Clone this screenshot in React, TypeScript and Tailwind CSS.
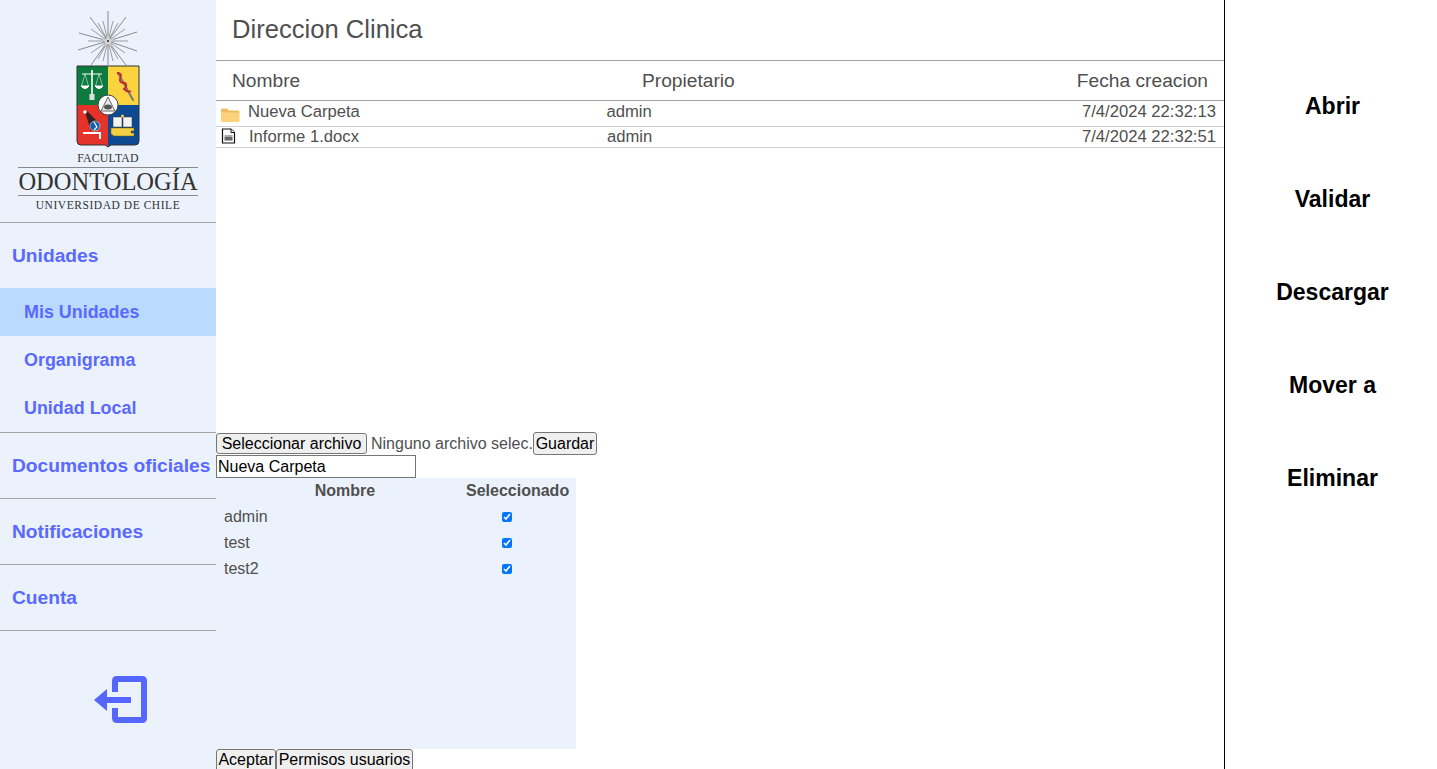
import React from "react";

const blue = "text-[#5a69ff]";

const longRays: [number, number][] = [
  [0, -30], [-29, -8], [-30, 9], [-18, -24], [18, -24], [29, -9], [29, 10], [-17, 24], [18, 24], [0, 24],
];
const shortRays: [number, number][] = [
  [-20, 0], [20, 0], [-10, -18], [10, -18], [-10, 18], [10, 18], [-17, -12], [17, -12], [-17, 12], [17, 12], [-5, -20], [5, -20], [-5, 20], [5, 20],
];

function Logo() {
  return (
    <svg width="64" height="140" viewBox="1 0 64 140" className="block">
      <g transform="translate(33,30)" stroke="#444" strokeWidth="0.6">
        {longRays.map(([x, y], i) => (
          <line key={i} x1="0" y1="0" x2={x} y2={y} />
        ))}
        {shortRays.map(([x, y], i) => (
          <line key={i} x1="0" y1="0" x2={x} y2={y} strokeWidth="0.5" />
        ))}
        <polygon points="0,-7 2,-2 7,-2 3,1 4,6 0,3 -4,6 -3,1 -7,-2 -2,-2" fill="#d5d5d5" stroke="#999" strokeWidth="0.4" />
        <circle cx="0" cy="0" r="1" fill="#222" stroke="none" />
      </g>
      <rect x="2" y="55" width="31" height="39" fill="#0d7a3f" />
      <rect x="33" y="55" width="31" height="39" fill="#fbd33f" />
      <path d="M2 94H33V136L30 134H6Q2 134 2 130Z" fill="#e5332a" />
      <path d="M33 94H64V130Q64 134 60 134H36L33 136Z" fill="#0d4a94" />
      <path d="M2 55H64V130Q64 134 60 134H36L33 136L30 134H6Q2 134 2 130Z" fill="none" stroke="#333" strokeWidth="1" />
      {/* balance */}
      <g stroke="#fff" strokeWidth="1" fill="none" transform="translate(1,0)">
        <line x1="16" y1="59" x2="16" y2="86" strokeWidth="1.600" />
        <line x1="6" y1="63" x2="26" y2="63" />
        <path d="M9 63L5.500 75M9 63L12.500 75M23 63L19.500 75M23 63L26.500 75" strokeWidth="0.500" />
        <path d="M5 75H13Q9 80 5 75ZM19 75H27Q23 80 19 75Z" fill="#fff" />
        <rect x="13.500" y="83" width="5" height="6" fill="#ddd" stroke="none" />
      </g>
      {/* snake staff */}
      <path d="M43 62L58 89" stroke="#777" strokeWidth="2" strokeLinecap="round" />
      <path d="M42 62Q48 62 45 68Q44 72 50 72Q53 75 49 78Q53 82 56 80" stroke="#c7252a" strokeWidth="1.800" fill="none" />
      {/* center */}
      <circle cx="33" cy="94" r="10" fill="#fff" stroke="#444" strokeWidth="1" />
      <polygon points="33,86 40,100 26,100" fill="#e8e8e8" stroke="#666" strokeWidth="1" />
      <ellipse cx="33" cy="96" rx="4" ry="2.500" fill="#555" />
      {/* red quadrant */}
      <polygon points="10,101 12,100 24,112 16,120" fill="#3a1f1f" />
      <circle cx="10" cy="101" r="1.800" fill="#fff" />
      <path d="M8 122H25V128" stroke="#fff" strokeWidth="2" fill="none" />
      <circle cx="20" cy="115" r="5" fill="#155fa8" stroke="#fff" strokeWidth="0.500" />
      <path d="M19 111L22 116L19 119" stroke="#fff" strokeWidth="1.200" fill="none" />
      {/* book */}
      <path d="M38 106H47V116H38ZM48 106H57V116H48Z" fill="#f2f2f2" stroke="#333" strokeWidth="0.500" />
      <circle cx="47.500" cy="105" r="1.500" fill="#f3cf45" />
      <path d="M36 117H59V120H56V122H59V125H39L36 123Z" fill="#f3cf45" stroke="#6f5c12" strokeWidth="0.500" />
    </svg>
  );
}

function DocIcon() {
  return (
    <svg width="15" height="16" viewBox="0 0 15 16" className="block">
      <path d="M1.500 1H10L13.500 4.500V15H1.500Z" fill="#fff" stroke="#111" strokeWidth="1.200" />
      <path d="M10 1V4.500H13.500" fill="#fff" stroke="#111" strokeWidth="1" />
      <rect x="3.500" y="7" width="8" height="2" fill="#aaa" />
      <rect x="3.500" y="9" width="8" height="3.500" fill="#666" />
    </svg>
  );
}

function FolderIcon() {
  return (
    <svg width="19" height="14" viewBox="0 0 19 14" className="block">
      <path d="M0 2Q0 0.500 1.500 0.500H6L8 2.500H17Q18.500 2.500 18.500 4V5H0Z" fill="#f0bd5e" />
      <path d="M0 4.500H18.500V12.500Q18.500 14 17 14H1.500Q0 14 0 12.500Z" fill="#fcd27a" />
    </svg>
  );
}

function NavTitle({ children }: { children: React.ReactNode }) {
  return <div className={`h-[66px] flex items-center pl-3 pt-[2px] text-[19.2px] font-bold border-b border-[#a5a5a5] whitespace-nowrap ${blue}`}>{children}</div>;
}

function SubItem({ children, active }: { children: React.ReactNode; active?: boolean }) {
  return <div className={`h-12 flex items-center pl-6 text-[17.92px] font-bold ${blue} ${active ? "bg-[#bbdaff]" : ""}`}>{children}</div>;
}

const btn = "border border-[#767676] bg-[#efefef] rounded-[3px] text-black text-base leading-[18px] shrink-0";

export default function App() {
  return (
    <div className="flex h-[769px] w-[1437px] overflow-hidden bg-white text-[#4f4f4f] font-['Liberation_Sans',Arial,sans-serif]">
      <aside className="w-[216px] shrink-0 bg-[#ebf2fb] flex flex-col">
        <div className="h-[223px] shrink-0 border-b border-[#a5a5a5] flex flex-col items-center">
          <div className="h-[150px] shrink-0 pt-[11px]"><Logo /></div>
          <div className="mt-[2px] text-[11.800px] leading-[13px] tracking-[0.2px] text-[#333] font-['Liberation_Serif',serif]">FACULTAD</div>
          <div className="mt-[2px] w-[180px] h-[29px] border-y border-[#888] text-center text-[24.500px] leading-[27px] text-[#333] font-['Liberation_Serif',serif] whitespace-nowrap">ODONTOLOGÍA</div>
          <div className="mt-[2px] text-[11.500px] leading-[14px] tracking-[0.55px] text-[#333] font-['Liberation_Serif',serif] whitespace-nowrap">UNIVERSIDAD DE CHILE</div>
        </div>
        <div className={`h-[65px] shrink-0 flex items-center pl-3 pt-[2px] text-[19.2px] font-bold ${blue}`}>Unidades</div>
        <div className="border-b border-[#a5a5a5] shrink-0">
          <SubItem active>Mis Unidades</SubItem>
          <SubItem>Organigrama</SubItem>
          <SubItem>Unidad Local</SubItem>
        </div>
        <NavTitle>Documentos oficiales</NavTitle>
        <NavTitle>Notificaciones</NavTitle>
        <NavTitle>Cuenta</NavTitle>
        <div className="pt-[45px] pl-[94px]">
          <svg width="54" height="48" viewBox="94 676 54 48" fill="none" className="block">
            <path d="M115 692V681Q115 679 117 679H142Q144 679 144 681V718Q144 720 142 720H117Q115 720 115 718V708" stroke="#5566ff" strokeWidth="6" />
            <path d="M105 700H131" stroke="#5566ff" strokeWidth="6" />
            <polygon points="94,700 107,689 107,711" fill="#5566ff" />
          </svg>
        </div>
      </aside>

      <main className="w-[1009px] shrink-0 border-r border-black flex flex-col h-[769px] overflow-hidden">
        <div className="h-[61px] shrink-0 border-b border-[#a0a0a0] pl-4 flex items-center text-[25.6px] pb-[1px]">Direccion Clinica</div>
        <div className="h-[40px] shrink-0 border-b border-[#a0a0a0] relative flex items-center justify-between pl-4 pr-4 pt-[1px] text-[19.2px]">
          <span>Nombre</span>
          <span className="absolute left-[426px]">Propietario</span>
          <span>Fecha creacion</span>
        </div>
        <div className="h-[26px] shrink-0 border-b border-[#cfcfcf] flex items-center text-[16.64px] pr-2 pb-[2px]">
          <span className="w-[32px] pl-[5px] pt-[4px] shrink-0"><FolderIcon /></span>
          <span className="w-[358.500px] shrink-0">Nueva Carpeta</span>
          <span className="flex-1">admin</span>
          <span>7/4/2024 22:32:13</span>
        </div>
        <div className="h-[21px] shrink-0 border-b border-[#cfcfcf] flex items-center text-[16.64px] pr-2">
          <span className="w-[33px] pl-[5px] pb-[2px] shrink-0"><DocIcon /></span>
          <span className="w-[358px] shrink-0">Informe 1.docx</span>
          <span className="flex-1">admin</span>
          <span>7/4/2024 22:32:51</span>
        </div>

        <div className="h-[284px] shrink-0" />

        <div className="h-[23px] shrink-0 flex items-center text-base whitespace-nowrap">
          <button className={`${btn} h-[21px] w-[151px]`}>Seleccionar archivo</button>
          <span className="ml-[4px] w-[162px] shrink-0">Ninguno archivo selec.</span>
          <button className={`${btn} h-[23px] w-[64px]`}>Guardar</button>
        </div>
        <input readOnly value="Nueva Carpeta" className="block shrink-0 h-[23px] w-[200px] border border-[#767676] px-[1px] text-base text-black bg-white outline-none" />
        <div className="w-[360px] h-[271px] shrink-0 bg-[#ebf2fb] flex flex-col">
          <div className="flex h-[26px] items-center font-bold text-base">
            <span className="w-[250px] pl-2 text-center">Nombre</span>
            <span className="w-[102px] text-center whitespace-nowrap">Seleccionado</span>
          </div>
          {["admin", "test", "test2"].map((n) => (
            <div key={n} className="flex h-[26px] items-center text-base">
              <span className="w-[258px] pl-2">{n}</span>
              <span className="w-[66px] flex justify-center">
                <input type="checkbox" checked readOnly className="w-[10px] h-[10px] m-0 accent-[#0075ff]" />
              </span>
            </div>
          ))}
        </div>
        <div className="flex h-[23px] shrink-0 whitespace-nowrap">
          <button className={`${btn} w-[60px] h-[23px] pb-[2px]`}>Aceptar</button>
          <button className={`${btn} w-[137px] h-[23px] pb-[2px]`}>Permisos usuarios</button>
        </div>
      </main>

      <aside className="flex-1 flex flex-col items-center pt-[60px] pl-[3px] text-black text-[23.04px] font-bold">
        {["Abrir", "Validar", "Descargar", "Mover a", "Eliminar"].map((t) => (
          <div key={t} className="h-[93px] flex items-center justify-center w-full">{t}</div>
        ))}
      </aside>
    </div>
  );
}
